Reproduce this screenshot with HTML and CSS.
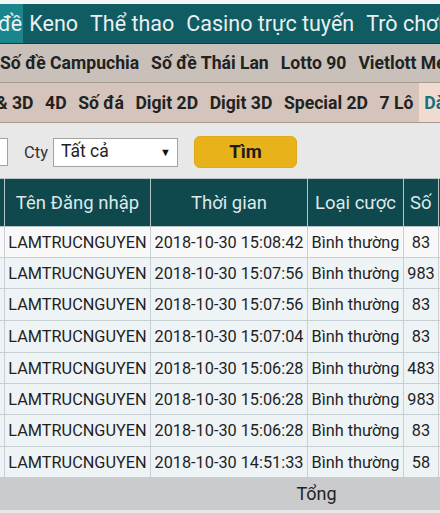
FILE: index.html
```html
<!DOCTYPE html>
<html lang="vi">
<head>
<meta charset="utf-8">
<title>Lịch sử cược</title>
<link rel="stylesheet" href="styles.css">
</head>
<body>
<div class="page">
  <div class="status-strip"></div>
  <nav class="top-nav">
    <span class="top-item active">đề</span>
    <span class="top-item">Keno</span>
    <span class="top-item">Thể thao</span>
    <span class="top-item">Casino trực tuyến</span>
    <span class="top-item">Trò chơi</span>
  </nav>
  <nav class="sub-nav">
    <span class="sub-item first">Số đề Campuchia</span>
    <span class="sub-item">Số đề Thái Lan</span>
    <span class="sub-item">Lotto 90</span>
    <span class="sub-item">Vietlott Mega</span>
  </nav>
  <nav class="game-nav">
    <span class="game-item first">&amp; 3D</span>
    <span class="game-item">4D</span>
    <span class="game-item">Số đá</span>
    <span class="game-item">Digit 2D</span>
    <span class="game-item">Digit 3D</span>
    <span class="game-item">Special 2D</span>
    <span class="game-item">7 Lô</span>
    <span class="game-item active">Dàn</span>
  </nav>
  <div class="filters">
    <div class="text-input"></div>
    <label class="filter-label">Cty</label>
    <div class="select">
      <span class="select-value">Tất cả</span>
      <span class="select-arrow">▼</span>
    </div>
    <button class="search-btn">Tìm</button>
  </div>
  <div class="table-wrap">
    <table class="bets">
      <colgroup>
        <col class="c0"><col class="c1"><col class="c2"><col class="c3"><col class="c4"><col class="c5">
      </colgroup>
      <thead>
        <tr>
          <th>STT</th>
          <th>Tên Đăng nhập</th>
          <th>Thời gian</th>
          <th>Loại cược</th>
          <th class="left">Số</th>
          <th>Tiền cược</th>
        </tr>
      </thead>
      <tbody>
        <tr class="first-row"><td>1</td><td>LAMTRUCNGUYEN</td><td>2018-10-30 15:08:42</td><td>Bình thường</td><td>83</td><td></td></tr>
        <tr><td>2</td><td>LAMTRUCNGUYEN</td><td>2018-10-30 15:07:56</td><td>Bình thường</td><td>983</td><td></td></tr>
        <tr class="tall"><td>3</td><td>LAMTRUCNGUYEN</td><td>2018-10-30 15:07:56</td><td>Bình thường</td><td>83</td><td></td></tr>
        <tr class="tall"><td>4</td><td>LAMTRUCNGUYEN</td><td>2018-10-30 15:07:04</td><td>Bình thường</td><td>83</td><td></td></tr>
        <tr><td>5</td><td>LAMTRUCNGUYEN</td><td>2018-10-30 15:06:28</td><td>Bình thường</td><td>483</td><td></td></tr>
        <tr><td>6</td><td>LAMTRUCNGUYEN</td><td>2018-10-30 15:06:28</td><td>Bình thường</td><td>983</td><td></td></tr>
        <tr class="tall"><td>7</td><td>LAMTRUCNGUYEN</td><td>2018-10-30 15:06:28</td><td>Bình thường</td><td>83</td><td></td></tr>
        <tr><td>8</td><td>LAMTRUCNGUYEN</td><td>2018-10-30 14:51:33</td><td>Bình thường</td><td>58</td><td></td></tr>
      </tbody>
      <tfoot>
        <tr><td colspan="6">Tổng</td></tr>
      </tfoot>
    </table>
  </div>
</div>
</body>
</html>
```
FILE: styles.css
```css
html, body {
  margin: 0;
  padding: 0;
  background: #ffffff;
}
body {
  font-family: Roboto, "Noto Sans", "Liberation Sans", sans-serif;
  color: #222222;
  overflow: hidden;
}
.page {
  width: 440px;
  height: 513px;
  overflow: hidden;
  background: #e8e8e8;
}
.status-strip {
  height: 4px;
  background: #f4f6f6;
}
.top-nav {
  display: flex;
  height: 39px;
  background: #0f5c62;
  border-bottom: 1px solid #0a4146;
  white-space: nowrap;
  overflow: hidden;
}
.top-item {
  display: flex;
  align-items: center;
  padding: 0 6px;
  font-size: 21.5px;
  color: #e8f0f1;
  flex-shrink: 0;
}
.top-item.active {
  background: #1b858e;
  margin-left: -2px;
  padding: 0 1px 0 0;
}
.sub-nav {
  display: flex;
  height: 38px;
  background: #c9c0b9;
  border-bottom: 1px solid #a59b93;
  white-space: nowrap;
  overflow: hidden;
}
.sub-item {
  display: flex;
  align-items: center;
  padding: 0 6px;
  font-size: 17.6px;
  font-weight: 700;
  color: #222222;
  flex-shrink: 0;
}
.sub-item.first {
  padding-left: 0;
}
.game-nav {
  display: flex;
  height: 39px;
  background: #d5c4bb;
  border-bottom: 1px solid #aa9b91;
  white-space: nowrap;
  overflow: hidden;
}
.game-item {
  display: flex;
  align-items: center;
  padding: 0 5.8px;
  font-size: 17.6px;
  font-weight: 700;
  color: #222222;
  flex-shrink: 0;
}
.game-item.first {
  padding-left: 0;
  margin-left: -4px;
}
.game-item.active {
  background: #f1dbd1;
  color: #17717a;
  padding-left: 5px;
}
.filters {
  display: flex;
  align-items: center;
  height: 55px;
  padding-top: 3px;
  box-sizing: border-box;
  background: #e8e8e8;
}
.text-input {
  width: 60px;
  height: 28px;
  margin-left: -52px;
  background: #ffffff;
  border: 1px solid #a3a3a3;
  box-sizing: border-box;
  flex-shrink: 0;
}
.filter-label {
  margin-left: 16px;
  font-size: 16.5px;
  color: #333333;
}
.select {
  display: flex;
  align-items: center;
  justify-content: space-between;
  width: 125px;
  height: 29px;
  margin-left: 5px;
  padding: 0 6px 0 7px;
  background: #ffffff;
  border: 1px solid #a3a3a3;
  box-sizing: border-box;
}
.select-value {
  font-size: 17.5px;
  color: #222222;
  margin-top: -3px;
}
.select-arrow {
  font-size: 11px;
  color: #111111;
}
.search-btn {
  width: 103px;
  height: 32px;
  margin-left: 16px;
  background: #e7b21a;
  border: 1px solid #dcaa1a;
  border-radius: 6px;
  font-family: Roboto, "Noto Sans", "Liberation Sans", sans-serif;
  font-size: 18.5px;
  font-weight: 700;
  color: #1d1d1d;
  padding: 0;
}
.table-wrap {
  width: 440px;
  overflow: hidden;
}
.bets {
  border-collapse: collapse;
  table-layout: fixed;
  width: 784px;
  margin-left: -76px;
}
.c0 { width: 80px; }
.c1 { width: 146px; }
.c2 { width: 157px; }
.c3 { width: 96px; }
.c4 { width: 35px; }
.c5 { width: 270px; }
.bets th {
  height: 48px;
  padding: 0 3px;
  background: #0f484d;
  color: #dde9ea;
  font-weight: 400;
  font-size: 18.5px;
  border: 1px solid #b9c6c9;
  text-align: center;
  white-space: nowrap;
  overflow: hidden;
  box-sizing: border-box;
}
.bets th.left {
  text-align: left;
  padding-left: 6px;
}
.bets td {
  height: 31px;
  padding: 0 2px;
  font-size: 16.3px;
  color: #1f1f1f;
  text-align: center;
  white-space: nowrap;
  overflow: hidden;
  border: 1px solid #c6d0d4;
  background: #eef3f6;
  box-sizing: border-box;
}
.bets tbody tr.tall td {
  height: 32px;
}
.bets tbody tr.first-row td {
  background: #f8f8f8;
}
.bets tfoot td {
  height: 32px;
  background: #c9cbcc;
  font-size: 18px;
  color: #222222;
  border: none;
  border-top: 1px solid #c6d0d4;
}
```
